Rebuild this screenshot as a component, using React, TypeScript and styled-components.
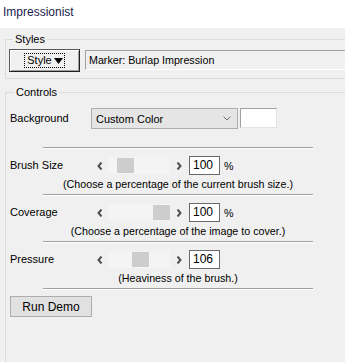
import styled, { createGlobalStyle } from "styled-components";

const GlobalStyle = createGlobalStyle`
  html, body {
    margin: 0;
    padding: 0;
    background: #f0f0f0;
  }
  body {
    font-family: "Liberation Sans", Arial, sans-serif;
    font-size: 10.7px;
    color: #000;
  }
`;

const Window = styled.div`
  width: 345px;
  height: 362px;
  overflow: hidden;
  background: #f0f0f0;
`;

const TitleBar = styled.div`
  height: 28px;
  background: #fff;
  padding: 4px 0 0 3px;
  box-sizing: border-box;
  font-size: 12px;
  line-height: 16px;
  color: #1c1c50;
`;

const Content = styled.div`
  padding-left: 5px;
`;

const Group = styled.fieldset<{ $top: number }>`
  margin: ${(p) => p.$top}px 0 0 0;
  padding: 3px 0 6px 3px;
  border: 1px solid #dcdcdc;
  border-right: none;
  min-width: 0;
`;

const GroupTall = styled(Group)`
  padding: 9px 0 60px 4px;
  border-bottom: none;
`;

const Legend = styled.legend`
  margin-left: 4px;
  padding: 0 2px;
  font-size: 11px;
  line-height: 13px;
`;

const StylesRow = styled.div`
  display: flex;
  align-items: flex-start;
  gap: 5px;
`;

const StyleButton = styled.button`
  width: 71px;
  height: 23px;
  padding: 0;
  background: #f0f0f0;
  border: 1px solid #5a5a5a;
  border-bottom-color: #202020;
  border-right-color: #202020;
  box-shadow: inset 1px 1px #fff, inset -1px -1px #a0a0a0;
  display: flex;
  align-items: center;
  justify-content: center;
  font: inherit;
  font-size: 11px;
  color: #000;
`;

const FocusBox = styled.span`
  display: flex;
  align-items: center;
  gap: 2px;
  border: 1px dotted #000;
  padding: 0 1px 0 2px;
  height: 13px;
  line-height: 13px;
`;

const ReadOnlyField = styled.div`
  flex: 1;
  height: 20px;
  margin-top: 1px;
  box-sizing: border-box;
  border-top: 1px solid #a0a0a0;
  border-left: 1px solid #a0a0a0;
  border-bottom: 1px solid #fff;
  background: #f0f0f0;
  padding: 0 0 0 3px;
  line-height: 18px;
  white-space: nowrap;
`;

const BgRow = styled.div`
  display: flex;
  align-items: center;
  height: 21px;
`;

const Label = styled.div`
  width: 81px;
  line-height: 13px;
  font-size: 11px;
`;

const Combo = styled.div`
  width: 147px;
  height: 21px;
  box-sizing: border-box;
  border: 1px solid #adadad;
  background: #e5e5e5;
  display: flex;
  align-items: center;
  justify-content: space-between;
  padding: 0 6px 0 4px;
  font-size: 11px;
`;

const Swatch = styled.div`
  width: 37px;
  height: 20px;
  margin: -2px 0 0 2px;
  box-sizing: border-box;
  background: #fff;
  border: 1px solid #e3e3e3;
  border-top-color: #a0a0a0;
  border-left-color: #a0a0a0;
`;

const Separator = styled.div<{ $gap: number }>`
  margin: ${(p) => p.$gap}px 0 0 33px;
  width: 270px;
  border-top: 1px solid #a0a0a0;
  border-bottom: 1px solid #fff;
`;

const ControlBlock = styled.div`
  display: flex;
  flex-direction: column;
`;

const SliderRow = styled.div`
  margin-top: 7px;
  display: flex;
  align-items: center;
  height: 19px;
`;

const ScrollBar = styled.div`
  width: 96px;
  height: 17px;
  display: flex;
  align-items: stretch;
  background: #f0f0f0;
`;

const ArrowBtn = styled.div`
  width: 17px;
  display: flex;
  align-items: center;
  justify-content: center;
`;

const Track = styled.div`
  flex: 1;
  position: relative;
  background: #f4f4f4;
`;

const Thumb = styled.div`
  position: absolute;
  top: 1px;
  width: 17px;
  height: 15px;
  background: #cdcdcd;
`;

const ValueBox = styled.div`
  width: 31px;
  height: 19px;
  margin-left: 2px;
  box-sizing: border-box;
  border: 1px solid #6a6a6a;
  background: #fff;
  padding-left: 3px;
  line-height: 17px;
  font-size: 12px;
`;

const Unit = styled.span`
  margin-left: 4px;
`;

const Hint = styled.div`
  margin: 3px 0 0 33px;
  width: 270px;
  text-align: center;
  line-height: 13px;
`;

const RunButton = styled.button`
  margin-top: 6px;
  width: 82px;
  height: 21px;
  padding: 0;
  background: #e1e1e1;
  border: 1px solid #adadad;
  font: inherit;
  font-size: 12px;
  color: #000;
`;

const Chevron = ({ dir }: { dir: "left" | "right" }) => (
  <svg width="6" height="8" viewBox="0 0 6 8">
    <polyline
      points={dir === "left" ? "4.5,0.5 1.5,4 4.5,7.5" : "1.5,0.5 4.5,4 1.5,7.5"}
      fill="none"
      stroke="#505050"
      strokeWidth="2"
    />
  </svg>
);

const controls = [
  { label: "Brush Size", value: "100", unit: "%", thumb: 9, hint: "(Choose a percentage of the current brush size.)" },
  { label: "Coverage", value: "100", unit: "%", thumb: 45, hint: "(Choose a percentage of the image to cover.)" },
  { label: "Pressure", value: "106", unit: "", thumb: 24, hint: "(Heaviness of the brush.)" },
];

export default function App() {
  return (
    <Window>
      <GlobalStyle />
      <TitleBar>Impressionist</TitleBar>
      <Content>
        <Group $top={5}>
          <Legend>Styles</Legend>
          <StylesRow>
            <StyleButton>
              <FocusBox>
                Style
                <svg width="9" height="6" viewBox="0 0 9 6">
                  <polygon points="0,0 9,0 4.5,6" fill="#000" />
                </svg>
              </FocusBox>
            </StyleButton>
            <ReadOnlyField>Marker: Burlap Impression</ReadOnlyField>
          </StylesRow>
        </Group>
        <GroupTall $top={7}>
          <Legend>Controls</Legend>
          <BgRow>
            <Label>Background</Label>
            <Combo>
              <span>Custom Color</span>
              <svg width="8" height="5" viewBox="0 0 8 5">
                <polyline points="0.5,0.5 4,4 7.5,0.5" fill="none" stroke="#707070" strokeWidth="1" />
              </svg>
            </Combo>
            <Swatch />
          </BgRow>
          <Separator $gap={18} />
          {controls.map((c) => (
            <ControlBlock key={c.label}>
              <SliderRow>
                <Label>{c.label}</Label>
                <ScrollBar>
                  <ArrowBtn>
                    <Chevron dir="left" />
                  </ArrowBtn>
                  <Track>
                    <Thumb style={{ left: c.thumb }} />
                  </Track>
                  <ArrowBtn>
                    <Chevron dir="right" />
                  </ArrowBtn>
                </ScrollBar>
                <ValueBox>{c.value}</ValueBox>
                {c.unit && <Unit>{c.unit}</Unit>}
              </SliderRow>
              <Hint>{c.hint}</Hint>
              <Separator $gap={3} />
            </ControlBlock>
          ))}
          <RunButton>Run Demo</RunButton>
        </GroupTall>
      </Content>
    </Window>
  );
}
